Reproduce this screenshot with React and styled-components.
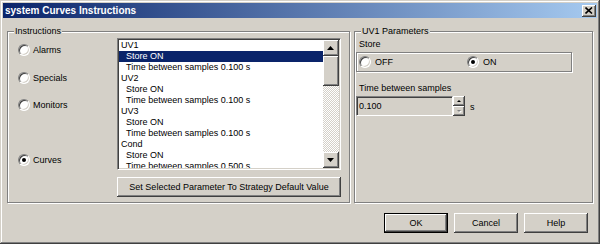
import React from 'react';
import styled, { createGlobalStyle, css } from 'styled-components';

const GlobalStyle = createGlobalStyle`
    body {
        margin: 0;
        background: #d4d0c8;
        font-family: "Liberation Sans", Arial, sans-serif;
        font-size: 9px;
    }
`;

const raised = css`
    box-shadow: inset -1px -1px #404040, inset 1px 1px #ffffff,
        inset -2px -2px #808080, inset 2px 2px #d4d0c8;
`;

const sunken = css`
    border: 1px solid;
    border-color: #808080 #ffffff #ffffff #808080;
    box-shadow: inset 1px 1px #404040, inset -1px -1px #d4d0c8;
`;

const etched = css`
    border: 1px solid #808080;
    box-shadow: inset 1px 1px #ffffff, 1px 1px #ffffff;
`;

const Window = styled.div`
    width: 600px;
    height: 244px;
    box-sizing: border-box;
    padding: 3px;
    background: #d4d0c8;
    box-shadow: inset -1px -1px #404040, inset 1px 1px #d4d0c8,
        inset -2px -2px #808080, inset 2px 2px #ffffff;
    display: flex;
    flex-direction: column;
`;

const TitleBar = styled.div`
    height: 15px;
    display: flex;
    align-items: center;
    justify-content: space-between;
    padding-left: 2px;
    background: linear-gradient(to right, #0a246a, #a6caf0);
`;

const TitleText = styled.span`
    color: #ffffff;
    font-weight: bold;
    font-size: 10px;
    line-height: 15px;
`;

const CloseButton = styled.div`
    width: 14px;
    height: 12px;
    margin-right: 1px;
    box-sizing: border-box;
    background: #d4d0c8;
    display: flex;
    align-items: center;
    justify-content: center;
    ${raised};
`;

const Content = styled.div`
    padding: 8px 4px 0 4px;
    display: flex;
    flex-direction: column;
`;

const GroupRow = styled.div`
    display: flex;
    gap: 4px;
`;

const Group = styled.fieldset`
    margin: 0;
    padding: 0;
    min-width: 0;
    width: ${(p) => p.$width}px;
    height: 177px;
    box-sizing: border-box;
    ${etched};
`;

const Legend = styled.legend`
    margin-left: 6px;
    padding: 0 1px;
    line-height: 11px;
    background: #d4d0c8;
    color: #000;
`;

const InstructionsBody = styled.div`
    display: flex;
    padding: 1px 8px 0 10px;
`;

const RadioColumn = styled.div`
    width: 99px;
    display: flex;
    flex-direction: column;
`;

const RadioRow = styled.label`
    display: flex;
    align-items: center;
    gap: ${(p) => p.$gap || 3}px;
    height: 12px;
    margin-top: ${(p) => p.$top || 0}px;
    width: ${(p) => (p.$width ? `${p.$width}px` : 'auto')};
    line-height: 12px;
    color: #000;
`;

const RadioDot = styled.span`
    width: 12px;
    height: 12px;
    flex: none;
    box-sizing: border-box;
    border-radius: 50%;
    background: #ffffff;
    display: flex;
    align-items: center;
    justify-content: center;
    ${sunken};

    &::after {
        content: '';
        width: 4px;
        height: 4px;
        border-radius: 50%;
        background: ${(p) => (p.$checked ? '#000' : 'transparent')};
    }
`;

const ListColumn = styled.div`
    display: flex;
    flex-direction: column;
    gap: 7px;
`;

const ListBox = styled.div`
    width: 224px;
    height: 132px;
    box-sizing: border-box;
    padding: 1px;
    background: #ffffff;
    display: flex;
    ${sunken};
`;

const Items = styled.div`
    flex: 1;
    overflow: hidden;
`;

const Item = styled.div`
    height: 11px;
    line-height: 11px;
    white-space: nowrap;
    padding-left: ${(p) => (p.$child ? 7 : 2)}px;
    background: ${(p) => (p.$selected ? '#0a246a' : 'transparent')};
    color: ${(p) => (p.$selected ? '#ffffff' : '#000')};
`;

const ScrollBar = styled.div`
    width: 16px;
    display: flex;
    flex-direction: column;
`;

const ScrollButton = styled.div`
    width: 16px;
    height: ${(p) => p.$height || 16}px;
    flex: none;
    box-sizing: border-box;
    background: #d4d0c8;
    display: flex;
    align-items: center;
    justify-content: center;
    ${raised};
`;

const Track = styled.div`
    flex: 1;
    background-color: #d4d0c8;
    background-image: repeating-conic-gradient(#ffffff 0 25%, #d4d0c8 0 50%);
    background-size: 2px 2px;
`;

const Button = styled.button`
    width: ${(p) => p.$width}px;
    height: 20px;
    box-sizing: border-box;
    padding: 0;
    border: ${(p) => (p.$default ? '1px solid #000' : 'none')};
    background: #d4d0c8;
    font-family: "Liberation Sans", Arial, sans-serif;
    font-size: 9px;
    color: #000;
    ${raised};
`;

const ParamsBody = styled.div`
    display: flex;
    flex-direction: column;
    padding: 2px 0 0 1px;
`;

const FieldLabel = styled.div`
    margin-left: 3px;
    margin-top: ${(p) => p.$top || 0}px;
    line-height: 11px;
    color: #000;
`;

const StoreBox = styled.div`
    width: 216px;
    height: 20px;
    margin-top: 2px;
    box-sizing: border-box;
    padding-left: 2px;
    display: flex;
    align-items: center;
    ${etched};
`;

const InputRow = styled.div`
    display: flex;
    align-items: center;
    margin-top: 2px;
`;

const NumberField = styled.div`
    width: 97px;
    height: 20px;
    box-sizing: border-box;
    padding-left: 2px;
    line-height: 18px;
    background: #d4d0c8;
    color: #000;
    ${sunken};
`;

const Spin = styled.div`
    display: flex;
    flex-direction: column;
`;

const SpinButton = styled.div`
    width: 12px;
    height: 10px;
    box-sizing: border-box;
    background: #d4d0c8;
    display: flex;
    align-items: center;
    justify-content: center;
    ${raised};
`;

const Unit = styled.span`
    margin-left: 5px;
    margin-top: 2px;
    color: #000;
`;

const Footer = styled.div`
    display: flex;
    justify-content: flex-end;
    gap: 6px;
    margin-top: 10px;
    padding-right: 5px;
`;

const Arrow = ({ down, size = 7, color = '#000', shadow }) => {
    const h = Math.ceil(size / 2);
    const pts = down
        ? `0,0 ${size},0 ${size / 2},${h}`
        : `0,${h} ${size},${h} ${size / 2},0`;
    return (
        <svg width={size + 1} height={h + 1} viewBox={`0 0 ${size + 1} ${h + 1}`}>
            {shadow && (
                <polygon points={pts} fill="#ffffff" transform="translate(1,1)" />
            )}
            <polygon points={pts} fill={color} />
        </svg>
    );
};

const Radio = ({ label, checked, top, width, gap }) => (
    <RadioRow $top={top} $width={width} $gap={gap}>
        <RadioDot $checked={checked} />
        {label}
    </RadioRow>
);

const items = [
    { text: 'UV1' },
    { text: 'Store ON', child: true, selected: true },
    { text: 'Time between samples 0.100 s', child: true },
    { text: 'UV2' },
    { text: 'Store ON', child: true },
    { text: 'Time between samples 0.100 s', child: true },
    { text: 'UV3' },
    { text: 'Store ON', child: true },
    { text: 'Time between samples 0.100 s', child: true },
    { text: 'Cond' },
    { text: 'Store ON', child: true },
    { text: 'Time between samples 0.500 s', child: true },
];

const App = () => (
    <>
        <GlobalStyle />
        <Window>
            <TitleBar>
                <TitleText>system Curves Instructions</TitleText>
                <CloseButton>
                    <svg width="8" height="7" viewBox="0 0 8 7">
                        <path d="M0.5 0.5 L7 6.5 M7 0.5 L0.5 6.5" stroke="#000" strokeWidth="1.6" />
                    </svg>
                </CloseButton>
            </TitleBar>
            <Content>
                <GroupRow>
                    <Group $width={343}>
                        <Legend>Instructions</Legend>
                        <InstructionsBody>
                            <RadioColumn>
                                <Radio label="Alarms" top={6} />
                                <Radio label="Specials" top={16} />
                                <Radio label="Monitors" top={15} />
                                <Radio label="Curves" top={43} checked />
                            </RadioColumn>
                            <ListColumn>
                                <ListBox>
                                    <Items>
                                        {items.map((item, i) => (
                                            <Item key={i} $child={item.child} $selected={item.selected}>
                                                {item.text}
                                            </Item>
                                        ))}
                                    </Items>
                                    <ScrollBar>
                                        <ScrollButton>
                                            <Arrow />
                                        </ScrollButton>
                                        <ScrollButton $height={30} />
                                        <Track />
                                        <ScrollButton>
                                            <Arrow down />
                                        </ScrollButton>
                                    </ScrollBar>
                                </ListBox>
                                <Button $width={224}>
                                    Set Selected Parameter To Strategy Default Value
                                </Button>
                            </ListColumn>
                        </InstructionsBody>
                    </Group>
                    <Group $width={239}>
                        <Legend>UV1 Parameters</Legend>
                        <ParamsBody>
                            <FieldLabel>Store</FieldLabel>
                            <StoreBox>
                                <Radio label="OFF" width={108} gap={4} />
                                <Radio label="ON" checked gap={4} />
                            </StoreBox>
                            <FieldLabel $top={11}>Time between samples</FieldLabel>
                            <InputRow>
                                <NumberField>0.100</NumberField>
                                <Spin>
                                    <SpinButton>
                                        <Arrow size={4} />
                                    </SpinButton>
                                    <SpinButton>
                                        <Arrow size={4} down color="#808080" shadow />
                                    </SpinButton>
                                </Spin>
                                <Unit>s</Unit>
                            </InputRow>
                        </ParamsBody>
                    </Group>
                </GroupRow>
                <Footer>
                    <Button $width={64} $default>OK</Button>
                    <Button $width={64}>Cancel</Button>
                    <Button $width={64}>Help</Button>
                </Footer>
            </Content>
        </Window>
    </>
);

export default App;
